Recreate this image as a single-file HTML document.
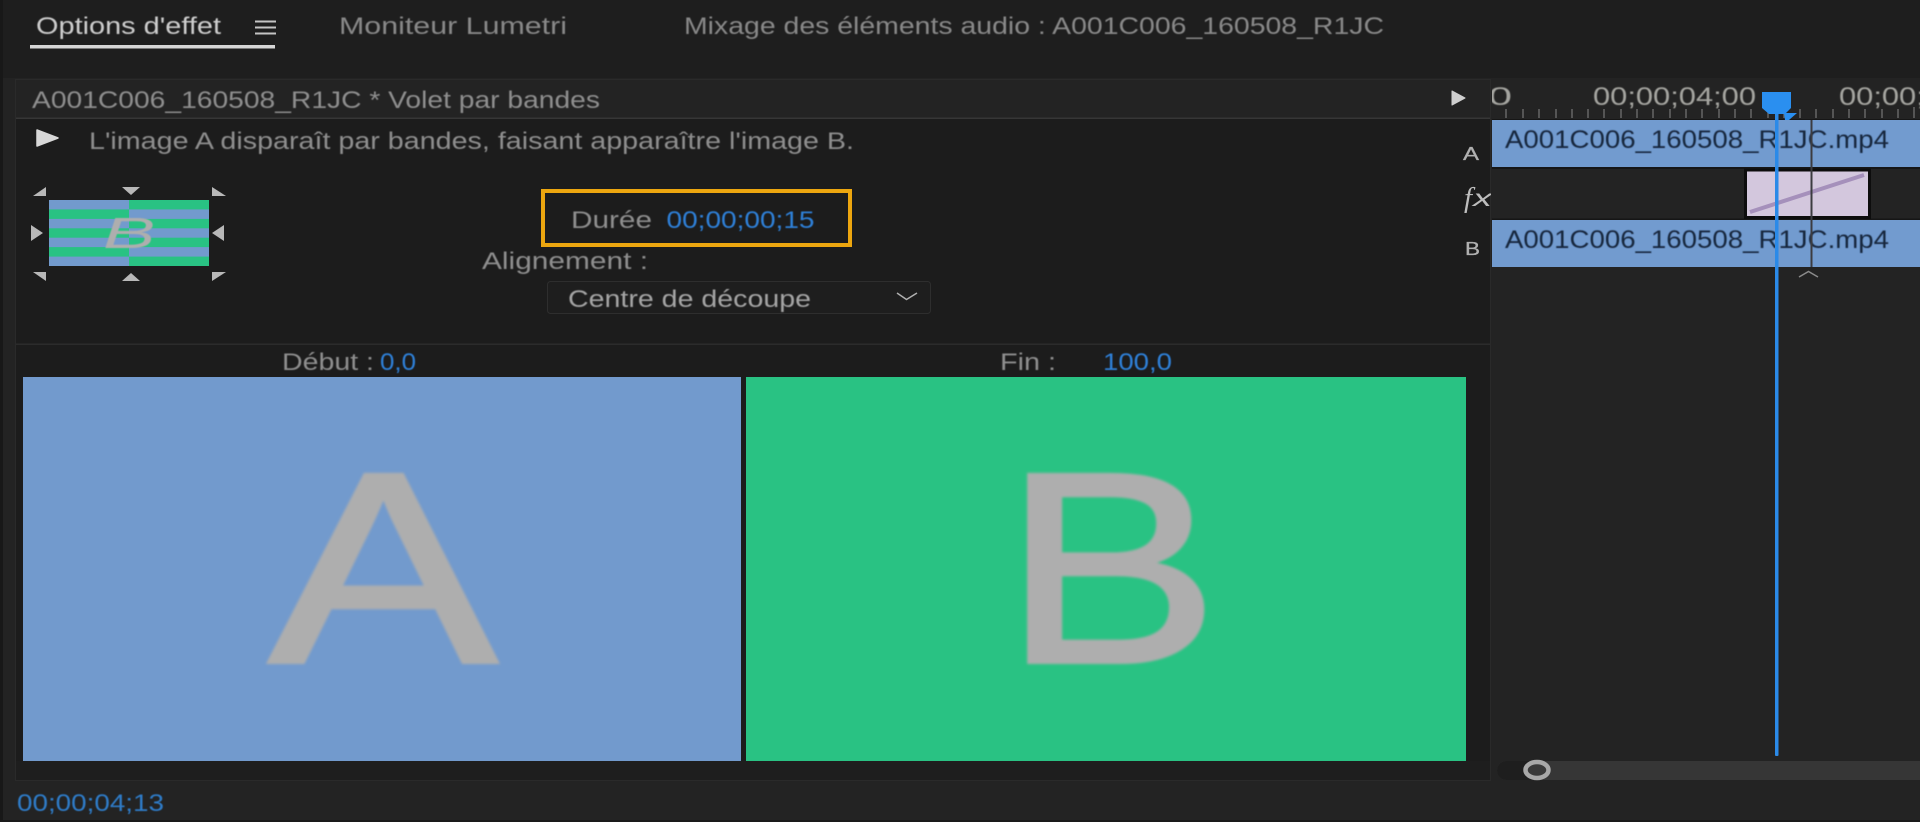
<!DOCTYPE html>
<html lang="fr"><head><meta charset="utf-8"><title>Options d'effet</title>
<style>html,body{margin:0;padding:0;background:#222;width:1920px;height:822px;overflow:hidden}svg{display:block}text{font-family:"Liberation Sans",sans-serif;white-space:pre}</style></head>
<body>
<svg width="1920" height="822" viewBox="0 0 1920 822" xmlns="http://www.w3.org/2000/svg">
<defs>
<filter id="b1" x="-5%" y="-5%" width="110%" height="110%"><feGaussianBlur stdDeviation="1.2"/></filter>
<filter id="b0" x="-5%" y="-20%" width="110%" height="140%"><feGaussianBlur stdDeviation="0.4"/></filter>
<clipPath id="tl"><rect x="1492" y="60" width="428" height="70"/></clipPath>
<clipPath id="thL"><rect x="49" y="200" width="80" height="66"/></clipPath>
<clipPath id="thR"><rect x="129" y="200" width="80" height="66"/></clipPath>
<clipPath id="fxc"><rect x="1455" y="180" width="36" height="40"/></clipPath>
</defs>
<rect width="1920" height="822" fill="#232323"/>
<rect width="1920" height="78" fill="#1e1e1e"/>
<rect width="3" height="822" fill="#181818"/>
<rect y="820" width="1920" height="2" fill="#1a1a1a"/>

<!-- Tabs -->
<g filter="url(#b0)" font-size="24">
<text x="36" y="34" textLength="185" lengthAdjust="spacingAndGlyphs" fill="#cdcdcd">Options d'effet</text>
<text x="339" y="34" textLength="228" lengthAdjust="spacingAndGlyphs" fill="#888">Moniteur Lumetri</text>
<text x="684" y="34" textLength="700" lengthAdjust="spacingAndGlyphs" fill="#888">Mixage des éléments audio : A001C006_160508_R1JC</text>
</g>
<rect x="30" y="45" width="245" height="3.500" fill="#d6d6d6"/>
<g fill="#c4c4c4"><rect x="255" y="20.500" width="21" height="2"/><rect x="255" y="26.500" width="21" height="2"/><rect x="255" y="32.500" width="21" height="2"/></g>

<!-- Panel -->
<rect x="15.500" y="79.500" width="1475" height="701" fill="#1c1c1c" stroke="#2a2a2a"/>
<rect x="16" y="80" width="1474" height="38" fill="#232323"/>
<rect x="16" y="117.500" width="1474" height="1.500" fill="#363636"/>
<rect x="16" y="343.500" width="1474" height="1.500" fill="#2b2b2b"/>
<rect x="16" y="761" width="1474" height="19" fill="#1e1e1e"/>

<!-- Dropdown -->
<rect x="547.500" y="281.500" width="383" height="32" rx="3" fill="#1e1e1e" stroke="#2e2e2e"/>
<polyline points="897,293 906.500,299.500 917,293" fill="none" stroke="#b0b0b0" stroke-width="1.500"/>

<g filter="url(#b0)" font-size="24">
<text x="32" y="108" textLength="568" lengthAdjust="spacingAndGlyphs" fill="#8e8e8e">A001C006_160508_R1JC * Volet par bandes</text>
<text x="89" y="149" textLength="765" lengthAdjust="spacingAndGlyphs" fill="#8e8e8e">L'image A disparaît par bandes, faisant apparaître l'image B.</text>
<text x="571" y="228" textLength="81" lengthAdjust="spacingAndGlyphs" fill="#8e8e8e">Durée</text>
<text x="666.500" y="228" textLength="148" lengthAdjust="spacingAndGlyphs" fill="#2f80d8">00;00;00;15</text>
<text x="482" y="269" textLength="166" lengthAdjust="spacingAndGlyphs" fill="#8e8e8e">Alignement :</text>
<text x="568" y="307" textLength="243" lengthAdjust="spacingAndGlyphs" fill="#a4a4a4">Centre de découpe</text>
<text x="282" y="370" textLength="92" lengthAdjust="spacingAndGlyphs" fill="#8e8e8e">Début :</text>
<text x="380" y="370" textLength="36" lengthAdjust="spacingAndGlyphs" fill="#2f80d8">0,0</text>
<text x="1000" y="370" textLength="56" lengthAdjust="spacingAndGlyphs" fill="#8e8e8e">Fin :</text>
<text x="1103" y="370" textLength="69" lengthAdjust="spacingAndGlyphs" fill="#2f80d8">100,0</text>
<text x="17" y="811" textLength="147" lengthAdjust="spacingAndGlyphs" fill="#2f7cc8">00;00;04;13</text>
</g>

<polygon points="37,130 58,138 37,146" fill="#d8d8d8" stroke="#d8d8d8" stroke-width="1.500" stroke-linejoin="round"/>
<polygon points="1452,91 1465,98 1452,105" fill="#cfcfcf" stroke="#cfcfcf" stroke-width="1" stroke-linejoin="round"/>

<!-- Thumbnail -->
<rect x="49" y="200" width="80" height="66" fill="#729acd"/>
<rect x="129" y="200" width="80" height="66" fill="#29c283"/>
<g fill="#29c283"><rect x="49" y="209.400" width="80" height="9.500"/><rect x="49" y="228.300" width="80" height="9.400"/><rect x="49" y="247.100" width="80" height="9.500"/></g>
<g fill="#729acd"><rect x="129" y="209.400" width="80" height="9.500"/><rect x="129" y="228.300" width="80" height="9.400"/><rect x="129" y="247.100" width="80" height="9.500"/></g>
<g filter="url(#b0)" fill="#aeaeae" font-size="44" font-style="italic">
<text x="103" y="248" textLength="50" lengthAdjust="spacingAndGlyphs" clip-path="url(#thL)">B</text>
<text x="109" y="248" textLength="46" lengthAdjust="spacingAndGlyphs" clip-path="url(#thR)">B</text>
</g>
<g fill="#b8b8b8">
<polygon points="33,196 46,187 46,196"/><polygon points="122,187 140,187 131,195"/><polygon points="212,187 226,196 212,196"/>
<polygon points="31,225 43,233 31,241"/><polygon points="224,225 212,233 224,241"/>
<polygon points="33,272 46,272 46,281"/><polygon points="122,281 140,281 131,273"/><polygon points="212,272 226,272 212,281"/>
</g>

<!-- Duration box -->
<rect x="543" y="191" width="307" height="54" fill="none" stroke="#eca60f" stroke-width="4"/>

<!-- Previews -->
<rect x="23" y="377" width="718" height="384" fill="#729acd"/>
<rect x="746" y="377" width="720" height="384" fill="#29c283"/>
<g filter="url(#b1)" fill="#aeaeae" stroke="#aeaeae" stroke-width="4" font-size="272">
<text x="269" y="662" textLength="228" lengthAdjust="spacingAndGlyphs">A</text>
<text x="1003" y="662" textLength="216" lengthAdjust="spacingAndGlyphs">B</text>
</g>

<!-- Timeline -->
<g clip-path="url(#tl)" filter="url(#b0)" font-size="25" fill="#a5a5a0">
<text x="1465" y="105" textLength="47" lengthAdjust="spacingAndGlyphs">00</text>
<text x="1593" y="105" textLength="163" lengthAdjust="spacingAndGlyphs">00;00;04;00</text>
<text x="1839" y="105" textLength="163" lengthAdjust="spacingAndGlyphs">00;00;05;00</text>
</g>
<g stroke="#666" stroke-width="1.500">
<path d="M1506 109V118M1523 109V118M1539 109V118M1556 109V118M1572 109V118M1588 109V118M1604 109V118M1621 109V118M1637 109V118M1653 109V118M1670 109V118M1686 109V118M1702 109V118M1719 109V118M1735 109V118M1751 109V118M1768 109V118M1784 109V118M1800 109V118M1816 109V118M1833 109V118M1849 109V118M1865 109V118M1882 109V118M1898 109V118M1914 107V118"/>
</g>

<!-- Clips -->
<rect x="1492" y="120" width="428" height="47" fill="#729bcf"/>
<rect x="1492" y="220" width="428" height="47" fill="#729bcf"/>
<rect x="1492" y="119" width="428" height="1" fill="#161616"/>
<rect x="1492" y="167" width="428" height="2" fill="#161616"/>
<rect x="1492" y="218.500" width="428" height="1.500" fill="#161616"/>
<g filter="url(#b0)" font-size="25" fill="#16263c">
<text x="1505" y="148" textLength="384" lengthAdjust="spacingAndGlyphs">A001C006_160508_R1JC.mp4</text>
<text x="1505" y="248" textLength="384" lengthAdjust="spacingAndGlyphs">A001C006_160508_R1JC.mp4</text>
</g>
<rect x="1745.500" y="170" width="124" height="47.500" fill="#d3c7dd" stroke="#0d0d0d" stroke-width="3"/>
<line x1="1750" y1="212" x2="1864" y2="175" stroke="#a590bb" stroke-width="4"/>

<!-- Lines -->
<rect x="1810.500" y="120" width="2" height="147" fill="#3c3c40"/>
<polyline points="1799,277 1808.500,271.500 1818,277" fill="none" stroke="#8a8a8a" stroke-width="1.500"/>
<rect x="1775" y="112" width="3.500" height="644" rx="1" fill="#2b8ae8"/>
<polygon points="1762,92 1791,92 1791,108 1785,114 1769,114 1762,108" fill="#2a8ff0"/>
<polygon points="1784,113 1797,113 1789,120 1785,120" fill="#2a8ff0"/>

<!-- Side labels -->
<g fill="#b0b0b0" font-size="18" stroke="#b0b0b0" stroke-width=".3">
<text x="1463" y="160" textLength="16" lengthAdjust="spacingAndGlyphs">A</text>
<text x="1465" y="255" textLength="15" lengthAdjust="spacingAndGlyphs">B</text>
</g>
<g clip-path="url(#fxc)" fill="#bdbdbd" font-style="italic">
<text x="1464" y="207" font-size="29" style="font-family:'Liberation Serif',serif">f</text>
<text x="1473" y="206" font-size="23" textLength="19" lengthAdjust="spacingAndGlyphs">x</text>
</g>

<!-- Scroll bar -->
<path d="M1506.500 761H1920V780H1506.500A9.500 9.500 0 0 1 1506.500 761Z" fill="#363636"/>
<path d="M1506.500 761H1537V780H1506.500A9.500 9.500 0 0 1 1506.500 761Z" fill="#1e1e1e"/>
<ellipse cx="1537" cy="770" rx="11.500" ry="8" fill="#3a3a3a" stroke="#a8a8a8" stroke-width="4.500"/>
</svg>
</body></html>
